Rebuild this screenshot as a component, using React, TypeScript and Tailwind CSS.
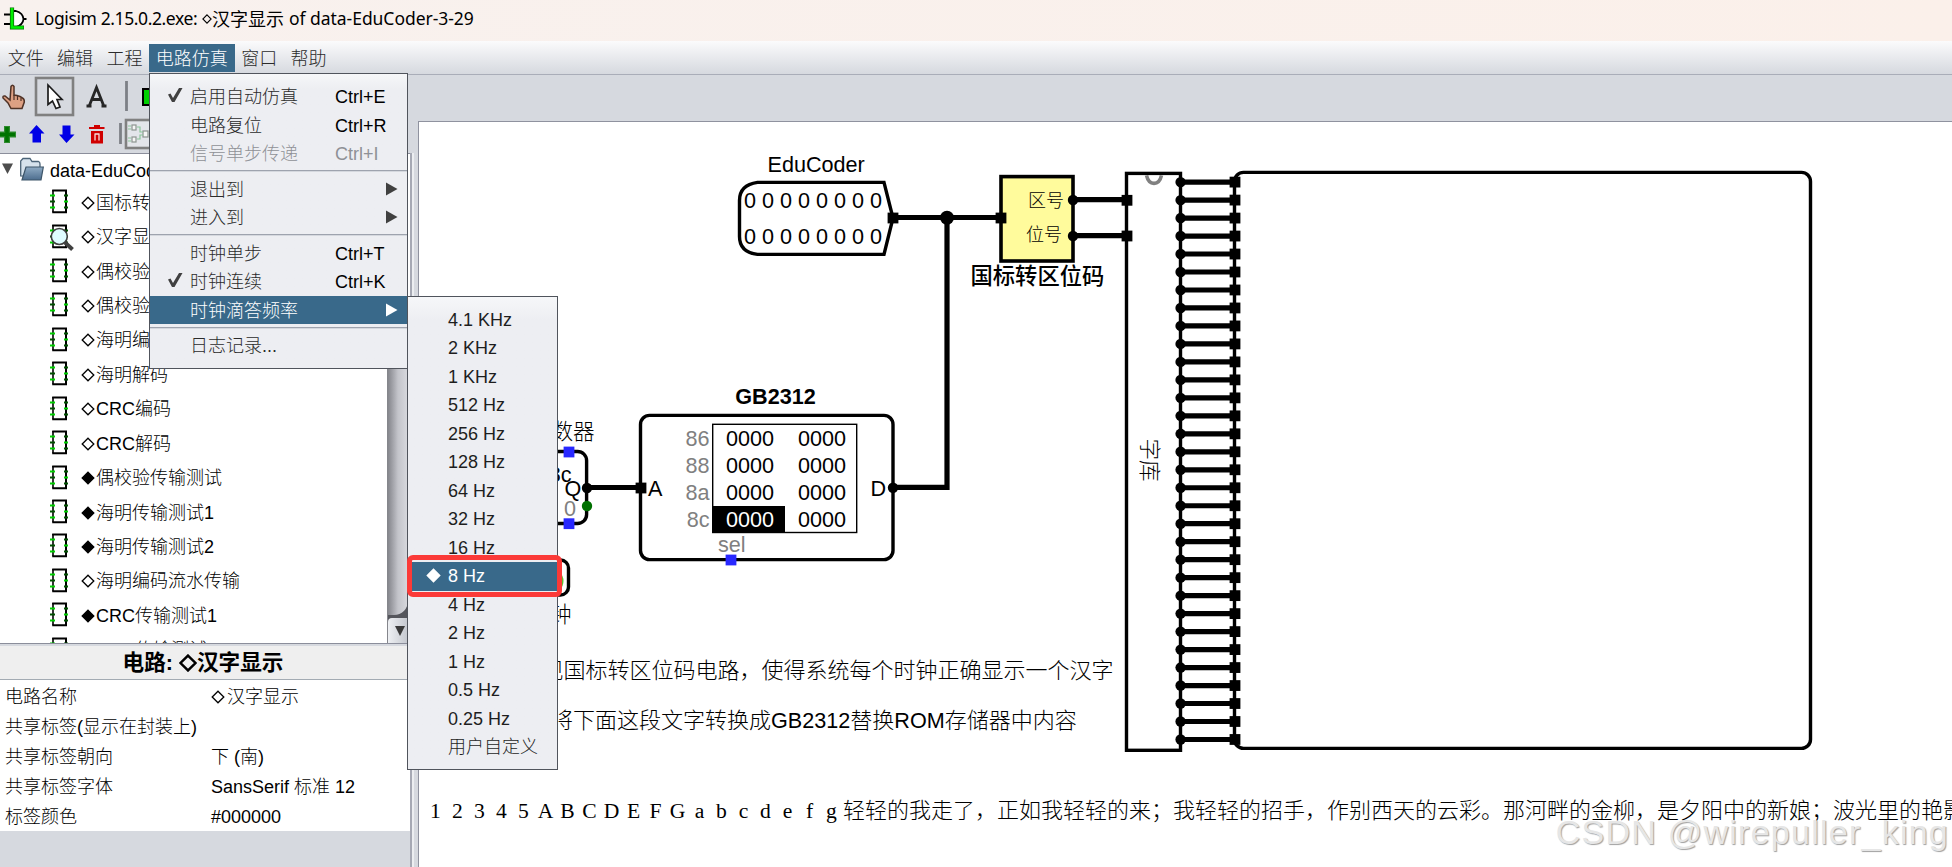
import React from "react";

type TreeRow = { mark: "◇" | "◆"; name: string; active?: boolean };

const treeRows: TreeRow[] = [
  { mark: "◇", name: "国标转区位码" },
  { mark: "◇", name: "汉字显示", active: true },
  { mark: "◇", name: "偶校验编码" },
  { mark: "◇", name: "偶校验检错" },
  { mark: "◇", name: "海明编码" },
  { mark: "◇", name: "海明解码" },
  { mark: "◇", name: "CRC编码" },
  { mark: "◇", name: "CRC解码" },
  { mark: "◆", name: "偶校验传输测试" },
  { mark: "◆", name: "海明传输测试1" },
  { mark: "◆", name: "海明传输测试2" },
  { mark: "◇", name: "海明编码流水传输" },
  { mark: "◆", name: "CRC传输测试1" },
  { mark: "◆", name: "CRC传输测试2" },
];

const menus = ["文件", "编辑", "工程", "电路仿真", "窗口", "帮助"];

type MenuRow = {
  label: string;
  shortcut?: string;
  checked?: boolean;
  disabled?: boolean;
  submenu?: boolean;
  active?: boolean;
};

const menuGroups: MenuRow[][] = [
  [
    { label: "启用自动仿真", shortcut: "Ctrl+E", checked: true },
    { label: "电路复位", shortcut: "Ctrl+R" },
    { label: "信号单步传递", shortcut: "Ctrl+I", disabled: true },
  ],
  [
    { label: "退出到", submenu: true },
    { label: "进入到", submenu: true },
  ],
  [
    { label: "时钟单步", shortcut: "Ctrl+T" },
    { label: "时钟连续", shortcut: "Ctrl+K", checked: true },
    { label: "时钟滴答频率", submenu: true, active: true },
  ],
  [{ label: "日志记录..." }],
];

const frequencies = [
  "4.1 KHz", "2 KHz", "1 KHz", "512 Hz", "256 Hz", "128 Hz", "64 Hz", "32 Hz",
  "16 Hz", "8 Hz", "4 Hz", "2 Hz", "1 Hz", "0.5 Hz", "0.25 Hz", "用户自定义",
];

const attributes = [
  { name: "电路名称", value: "汉字显示", mark: true },
  { name: "共享标签(显示在封装上)", value: "" },
  { name: "共享标签朝向", value: "下 (南)" },
  { name: "共享标签字体", value: "SansSerif 标准 12" },
  { name: "标签颜色", value: "#000000" },
];

const Diamond: React.FC<{ filled?: boolean; size?: number; stroke?: number }> = ({
  filled,
  size = 14,
  stroke = 1.3,
}) => (
  <svg width={size} height={size} viewBox="0 0 14 14" className="shrink-0">
    <path
      d="M7 1.2L12.8 7L7 12.8L1.2 7Z"
      fill={filled ? "currentColor" : "none"}
      stroke="currentColor"
      strokeWidth={stroke}
    />
  </svg>
);

const ChipIcon: React.FC<{ active?: boolean }> = ({ active }) => (
  <svg width="26" height="30" viewBox="0 0 26 30" className="mb-[2px] shrink-0 overflow-visible">
    <path d="M3 4V26" stroke="#000" strokeWidth="1.6" />
    <path d="M16 4V26" stroke="#000" strokeWidth="2" />
    <path d="M2.2 4.4H17M2.2 26.2H17" stroke="#000" strokeWidth="2" />
    <path d="M0 9.5H5M0 21.5H5M14 15.5H18" stroke="#00d000" strokeWidth="2" />
    <path d="M0 15.5H5M14 9.5H18M14 21.5H18" stroke="#005000" strokeWidth="2" />
    {active && (
      <>
        <path d="M15 21.5L22.5 28.5" stroke="#404040" strokeWidth="4" />
        <circle cx="9.3" cy="15.5" r="8" fill="#dffcff" stroke="#404040" strokeWidth="1.6" />
      </>
    )}
  </svg>
);

const Toolbars: React.FC = () => (
  <div className="h-[78px] shrink-0 overflow-hidden">
    <svg width="410" height="78" viewBox="0 75 410 78">
      {/* poke tool */}
      <path
        d="M11 86.5Q12.5 84 14 86.5V95L17 95.5L20 96.5L22.5 98Q24.5 99 24.3 102L22 108.5H11L8 103L3 98Q2.5 95.5 5 96L10 100Z"
        fill="#dda083"
        stroke="#4f3226"
        strokeWidth="1.5"
      />
      <path d="M14 95V100M17.5 96V100M21 98V101" stroke="#4f3226" strokeWidth="1.2" />
      {/* select tool */}
      <rect x="36" y="78" width="37" height="37" fill="none" stroke="#808080" strokeWidth="2.6" />
      <path
        d="M48 85V104.5L52.5 101L56 108.5L60 107L57 99.5H62Z"
        fill="#fff"
        stroke="#1c1c1c"
        strokeWidth="1.7"
      />
      {/* text tool */}
      <path
        d="M89 106.5L96.5 87.5L104 106.5M91.5 99.5H101.5M86.5 106H91.5M101.5 106H106.5"
        fill="none"
        stroke="#262626"
        strokeWidth="2.8"
      />
      <path d="M126.5 81V111" stroke="#7d8086" strokeWidth="2.8" />
      <rect x="143" y="89" width="20" height="16" fill="#00d000" stroke="#000" strokeWidth="2" />
      {/* project toolbar */}
      <path d="M7 126V143M-2 134.5H16" stroke="#2e8b2e" strokeWidth="6" />
      <path d="M7 127V142M-1 134.5H15" stroke="#007300" strokeWidth="3.6" />
      <path d="M36.5 125L44.5 133.5H41V142.5H32.5V133.5H29Z" fill="#0000e6" />
      <path d="M66.5 143L74.5 134.5H70.5V125.5H62.5V134.5H59Z" fill="#0000e6" />
      <path d="M89 128H104.5M94 126H100" stroke="#d00000" strokeWidth="2" />
      <path d="M91 131H103V143.5H91Z" fill="#d00000" />
      <path d="M95 134V140.5M99 134V140.5M94.5 134H99.5" fill="none" stroke="#f7dede" strokeWidth="1.3" />
      <path d="M120.5 123V144" stroke="#7d8086" strokeWidth="2.8" />
      <rect x="126" y="120" width="40" height="28" fill="#e3e5ea" stroke="#808080" strokeWidth="2.6" />
      <g fill="#f6f6f6" stroke="#8d9490" strokeWidth="1.2">
        <rect x="132" y="125" width="4" height="5" />
        <rect x="132" y="137" width="4" height="5" />
        <rect x="143" y="131" width="5" height="6" />
      </g>
      <path
        d="M128 126H131M128 129H131M128 138H131M128 141H131M137 127H140V132H143M137 139H140V135H143"
        fill="none"
        stroke="#8cc59a"
        strokeWidth="1.2"
      />
    </svg>
  </div>
);

const Explorer: React.FC = () => (
  <div className="flex h-[491px] shrink-0 border-y border-[#8b8e9b] bg-white">
    <div className="w-[387px] overflow-hidden text-black">
      <div className="flex h-[31px] items-center">
        <svg width="50" height="31" viewBox="0 155 50 31">
          <defs>
            <linearGradient id="folder" x1="0" y1="0" x2="0" y2="1">
              <stop offset="0" stopColor="#8fabc4" />
              <stop offset="1" stopColor="#4d6d8e" />
            </linearGradient>
          </defs>
          <path d="M2 164.5H13L7.5 175Z" fill="#4d4d4d" />
          <path
            d="M20.7 177V162L23 159.5H30L32 162.5H38.5Q40 163 40 165V178Z"
            fill="#d6e2ec"
            stroke="#4c6478"
            strokeWidth="1.3"
          />
          <path d="M26 168H43.3L41 181H22Z" fill="url(#folder)" stroke="#3c5468" strokeWidth="1.2" />
        </svg>
        <span className="pt-[2px] whitespace-nowrap">data-EduCoder-3-29</span>
      </div>
      {treeRows.map((row) => (
        <div key={row.name + row.mark} className="flex h-[34.43px] items-center pl-[50px]">
          <ChipIcon active={row.active} />
          <span className="ml-[5px] flex items-center gap-[1px] pt-px whitespace-nowrap">
            <Diamond filled={row.mark === "◆"} />
            {row.name}
          </span>
        </div>
      ))}
    </div>
    <div className="flex w-[21px] flex-col border-l border-[#85868c] bg-[#55565c]">
      <div className="flex-1 rounded-br-[14px] bg-gradient-to-r from-[#85868c] via-[#c3c4ca] to-[#d8d9de]" />
      <div className="mt-[3px] flex h-[25px] items-center justify-center rounded-tl-sm bg-gradient-to-r from-[#eef0f3] to-[#c4c7ce] pl-[3px]">
        <svg width="12" height="12" viewBox="0 0 12 12">
          <path d="M1 1H11L6 11Z" fill="#3a3a3a" />
        </svg>
      </div>
    </div>
  </div>
);

const AttributePanel: React.FC = () => (
  <>
    <div className="mt-[2px] flex h-[34px] shrink-0 items-center justify-center border-b border-[#a3abb3] bg-[#efefef] pr-1 text-[21.6px] font-bold text-black">
      <span>电路:&nbsp;</span>
      <Diamond size={18} stroke={1.9} />
      <span>汉字显示</span>
    </div>
    <div className="shrink-0 bg-white pt-[2px] text-black">
      {attributes.map((attr) => (
        <div key={attr.name} className="flex h-[29.8px] items-center pt-px pl-[5px]">
          <span className="w-[206px] shrink-0 whitespace-nowrap">{attr.name}</span>
          <span className="flex items-center gap-[2px] whitespace-pre">
            {attr.mark && <Diamond />}
            {attr.value}
          </span>
        </div>
      ))}
    </div>
  </>
);

const Pin: React.FC<{ x: number; y: number; fill?: string }> = ({ x, y, fill = "#000" }) => (
  <rect x={x - 5.4} y={y - 5.4} width="10.8" height="10.8" fill={fill} />
);

const Dot: React.FC<{ x: number; y: number; r?: number; fill?: string }> = ({
  x,
  y,
  r = 5.2,
  fill = "#000",
}) => <circle cx={x} cy={y} r={r} fill={fill} />;

const bitX = [750, 768, 786, 804, 822, 840, 858, 876];
const memoryRows = [
  { addr: "86", y: 446 },
  { addr: "88", y: 473 },
  { addr: "8a", y: 500 },
  { addr: "8c", y: 527 },
];
const ledRows = Array.from({ length: 32 }, (_, i) => 182.1 + i * 17.98);
const latinX = Array.from({ length: 19 }, (_, i) => 435.5 + i * 22).join(" ");

const Circuit: React.FC = () => (
  <svg width="1533" height="745" viewBox="419 122 1533 745" className="block text-[21.6px]">
    {/* wires */}
    <g stroke="#000" strokeWidth="5.2" fill="none">
      <path d="M893 217.5H1001M947 217.5V487.3M893 487.3H949.6M587 487.5H641" />
      <path d="M1073 199.7H1127M1073 235.7H1127" />
    </g>
    <Dot x={947} y={217.7} r={7} />

    {/* 16 bit probe pin */}
    <text x="767.5" y="172.3">EduCoder</text>
    <path
      d="M757.5 182.4H884L893 218L884 254.4H757.5Q739.5 252 739.5 236.4V200.4Q739.5 185 757.5 182.4Z"
      fill="#fff"
      stroke="#000"
      strokeWidth="3.4"
    />
    {bitX.map((x) => (
      <g key={x} textAnchor="middle">
        <text x={x} y="208.4">0</text>
        <text x={x} y="244.4">0</text>
      </g>
    ))}
    <Pin x={893} y={218} />

    {/* code converter */}
    <rect x="1001" y="176.6" width="72" height="84.4" fill="#fffb9c" stroke="#000" strokeWidth="3.6" />
    <g className="text-[18px]">
      <text x="1028" y="207">区号</text>
      <text x="1026" y="241">位号</text>
    </g>
    <text x="970.5" y="284" className="font-medium text-[22.3px]">国标转区位码</text>
    <Pin x={1001} y={218} />
    <Dot x={1073} y={200} />
    <Dot x={1073} y={236} />

    {/* glyph library */}
    <rect x="1126.5" y="173.4" width="54" height="576.9" fill="#fff" stroke="#000" strokeWidth="3.4" />
    <path d="M1146.5 175.3C1149 186 1159 186 1161.5 175.3" fill="none" stroke="#808080" strokeWidth="3.6" />
    <text transform="translate(1141.5 438.5) rotate(90)">字库</text>
    <Pin x={1127} y={200.3} />
    <Pin x={1127} y={236} />

    {/* dot matrix */}
    <rect x="1234.5" y="172.4" width="576" height="576" rx="9" fill="#fff" stroke="#000" strokeWidth="3.4" />
    {ledRows.map((y) => (
      <g key={y}>
        <path d={`M1181 ${y}H1235`} stroke="#000" strokeWidth="5.2" />
        <Dot x={1180.6} y={y} />
        <Pin x={1235} y={y} />
      </g>
    ))}

    {/* counter */}
    <text x="551.5" y="438.5">数器</text>
    <rect x="500" y="451.5" width="86.6" height="72" rx="9" fill="none" stroke="#000" strokeWidth="3.4" />
    <text x="571.5" y="482" textAnchor="end">8c</text>
    <text x="564.5" y="496">Q</text>
    <text x="570" y="516" textAnchor="middle" fill="#808080">0</text>
    <Pin x={569} y={452} fill="#2828ff" />
    <Pin x={569} y={523.7} fill="#2828ff" />
    <Dot x={587} y={488} />
    <Dot x={587} y={506} fill="#007000" />

    {/* clock */}
    <rect x="533" y="560" width="35.5" height="35" rx="8" fill="none" stroke="#000" strokeWidth="3.4" />
    <circle cx="551.5" cy="581" r="12" fill="#5fbf2f" />
    <text x="550" y="622">钟</text>

    {/* ROM */}
    <text x="775.5" y="404.3" textAnchor="middle" className="font-bold">GB2312</text>
    <rect x="640.5" y="415.4" width="252.5" height="144.2" rx="9" fill="#fff" stroke="#000" strokeWidth="3.4" />
    <rect x="712.7" y="424.3" width="144" height="108.2" fill="#fff" stroke="#000" strokeWidth="1.4" />
    <rect x="712" y="506" width="73" height="27" />
    {memoryRows.map(({ addr, y }) => (
      <g key={addr}>
        <text x="709.5" y={y} textAnchor="end" fill="#808080">{addr}</text>
        <text x="750" y={y} textAnchor="middle" fill={addr === "8c" ? "#fff" : "#000"}>0000</text>
        <text x="822" y={y} textAnchor="middle">0000</text>
      </g>
    ))}
    <text x="648" y="496.3">A</text>
    <text x="870.5" y="496.3">D</text>
    <text x="718" y="552.3" fill="#808080">sel</text>
    <Pin x={641} y={488} />
    <Dot x={893} y={487.7} />
    <Pin x={731} y={560} fill="#2828ff" />

    {/* notes */}
    <text x="541.5" y="678.3" className="text-[22px]">
      现国标转区位码电路，使得系统每个时钟正确显示一个汉字
    </text>
    <text x="551" y="728.3">
      <tspan className="text-[22px]">将下面这段文字转换成</tspan>
      GB2312
      <tspan className="text-[22px]">替换</tspan>
      ROM
      <tspan className="text-[22px]">存储器中内容</tspan>
    </text>
    <text x={latinX} y="817.5" textAnchor="middle" className="font-['Liberation_Serif',serif]">
      12345ABCDEFGabcdefg
    </text>
    <text x="843" y="818.3" className="text-[22px]">
      轻轻的我走了，正如我轻轻的来；我轻轻的招手，作别西天的云彩。那河畔的金柳，是夕阳中的新娘；波光里的艳影
    </text>
  </svg>
);

const SimulateMenu: React.FC = () => (
  <div className="absolute top-[73px] left-[149px] z-10 h-[296px] w-[259px] border border-[#50545c] bg-gradient-to-b from-[#f6f7f9] via-[#edeef2] via-5% to-[#edeef2] pt-[8px] text-[#2b2b2b]">
    {menuGroups.map((group, i) => (
      <React.Fragment key={i}>
        {i > 0 && (
          <div className="flex h-[7px] items-center">
            <div className="h-[2px] w-full border-t border-[#9ea3ae] bg-[#d5d8de]" />
          </div>
        )}
        {group.map((row) => (
          <div
            key={row.label}
            className={`flex h-[28.5px] items-center pt-[2px] pr-[9px] pl-[16px] ${
              row.active ? "bg-[#39698a] text-white" : ""
            } ${row.disabled ? "text-[#8f9196]" : ""}`}
          >
            <div className="w-[24px] shrink-0 pb-[4px]">
              {row.checked && (
                <svg width="18" height="18" viewBox="0 0 18 18">
                  <path d="M2 8.5L4.5 7.5L7 12L13 2H16.5L8.5 16H6Z" fill="#404040" />
                </svg>
              )}
            </div>
            <span className="w-[145px] shrink-0 whitespace-nowrap">{row.label}</span>
            <span className={row.disabled ? "" : "text-black"}>{row.shortcut}</span>
            {row.submenu && (
              <svg width="13" height="14" viewBox="0 0 13 14" className="mb-[2px] ml-auto">
                <path d="M1 .5L12.5 7L1 13.5Z" fill={row.active ? "#fff" : "#404040"} />
              </svg>
            )}
          </div>
        ))}
      </React.Fragment>
    ))}
  </div>
);

const FrequencyMenu: React.FC = () => (
  <div className="absolute top-[296px] left-[407px] z-20 h-[474px] w-[151px] border border-[#50545c] bg-gradient-to-b from-[#f6f7f9] via-[#edeef2] via-5% to-[#edeef2] pt-[8.5px] text-[#1e1e1e]">
    {frequencies.map((freq) => {
      const selected = freq === "8 Hz";
      return (
        <div
          key={freq}
          className={`flex h-[28.5px] items-center pl-[18px] ${selected ? "bg-[#39698a] text-white" : ""}`}
        >
          <div className="w-[22px] shrink-0 pb-[2px]">{selected && <Diamond filled size={15} />}</div>
          {freq}
        </div>
      );
    })}
  </div>
);

const App: React.FC = () => {
  return (
    <div className="relative flex h-[867px] w-[1952px] flex-col overflow-hidden bg-[#d6d9df] font-['Liberation_Sans','Noto_Sans_CJK_SC',sans-serif] text-[18px] leading-none font-light">
      {/* Title bar */}
      <div className="flex h-[41px] shrink-0 items-center bg-gradient-to-r from-[#f8f1ee] to-[#fbf0ea] pb-[3px] pl-[3px] font-['Noto_Sans','Noto_Sans_CJK_SC',sans-serif] text-[17.5px] font-normal text-black">
        <svg width="24" height="24" viewBox="0 0 24 24">
          <path d="M1 7.5H9M1 17H9" stroke="#000" strokeWidth="1.8" />
          <path d="M8 4H13Q20 6 20.5 12Q20 18 13 20H8Z" fill="#fff" stroke="#000" strokeWidth="1.8" />
          <path d="M20 12H23.5" stroke="#000" strokeWidth="2" />
          <path d="M9 .5V20.5H21" fill="none" stroke="#0a6b0a" strokeWidth="4.2" />
          <path d="M9 1V20.5H20.5" fill="none" stroke="#00f000" strokeWidth="2.6" />
        </svg>
        <span className="ml-[8px] w-[167px] tracking-[-0.4px] whitespace-nowrap">Logisim 2.15.0.2.exe:</span>
        <Diamond size={10} stroke={1.5} />
        <span className="text-[18px] whitespace-nowrap">汉字显示</span>
        <span className="ml-[5px] tracking-[-0.04px] whitespace-nowrap">of data-EduCoder-3-29</span>
      </div>

      {/* Menu bar */}
      <div className="flex h-[34px] shrink-0 items-end border-b border-[#a9adb8] bg-gradient-to-b from-[#fbfbfc] to-[#d6d9df] pb-[2px] pl-[1px] text-[#2b2b2b]">
        {menus.map((menu) => (
          <div
            key={menu}
            className={`flex h-[28px] items-center px-[6.7px] pt-[2px] ${
              menu === "电路仿真" ? "bg-[#39698a] text-white" : ""
            }`}
          >
            {menu}
          </div>
        ))}
      </div>

      <div className="flex min-h-0 flex-1">
        <div className="flex w-[410px] shrink-0 flex-col">
          <Toolbars />
          <Explorer />
          <AttributePanel />
        </div>
        <div className="mt-[78px] flex w-[8px] shrink-0 border-l-2 border-[#a6a9b4] bg-[#d6d9df]">
          <div className="w-[2px] bg-[#eceef1]" />
        </div>
        <div className="mt-[46px] flex-1 border-t border-l border-[#8f929f] bg-white">
          <Circuit />
        </div>
      </div>

      <SimulateMenu />
      <FrequencyMenu />

      {/* Highlight around the chosen frequency */}
      <div className="absolute top-[555px] left-[407px] z-30 h-[42px] w-[155px] rounded-[6px] border-[5px] border-[#fb3a38]" />

      {/* Watermark */}
      <div className="absolute right-[3px] bottom-[18px] z-30 text-[34px] font-normal tracking-[1.25px] whitespace-nowrap text-[#e6e6e6] [text-shadow:1px_1px_1px_#a0a0a0]">
        CSDN @wirepuller_king
      </div>
    </div>
  );
};

export default App;
